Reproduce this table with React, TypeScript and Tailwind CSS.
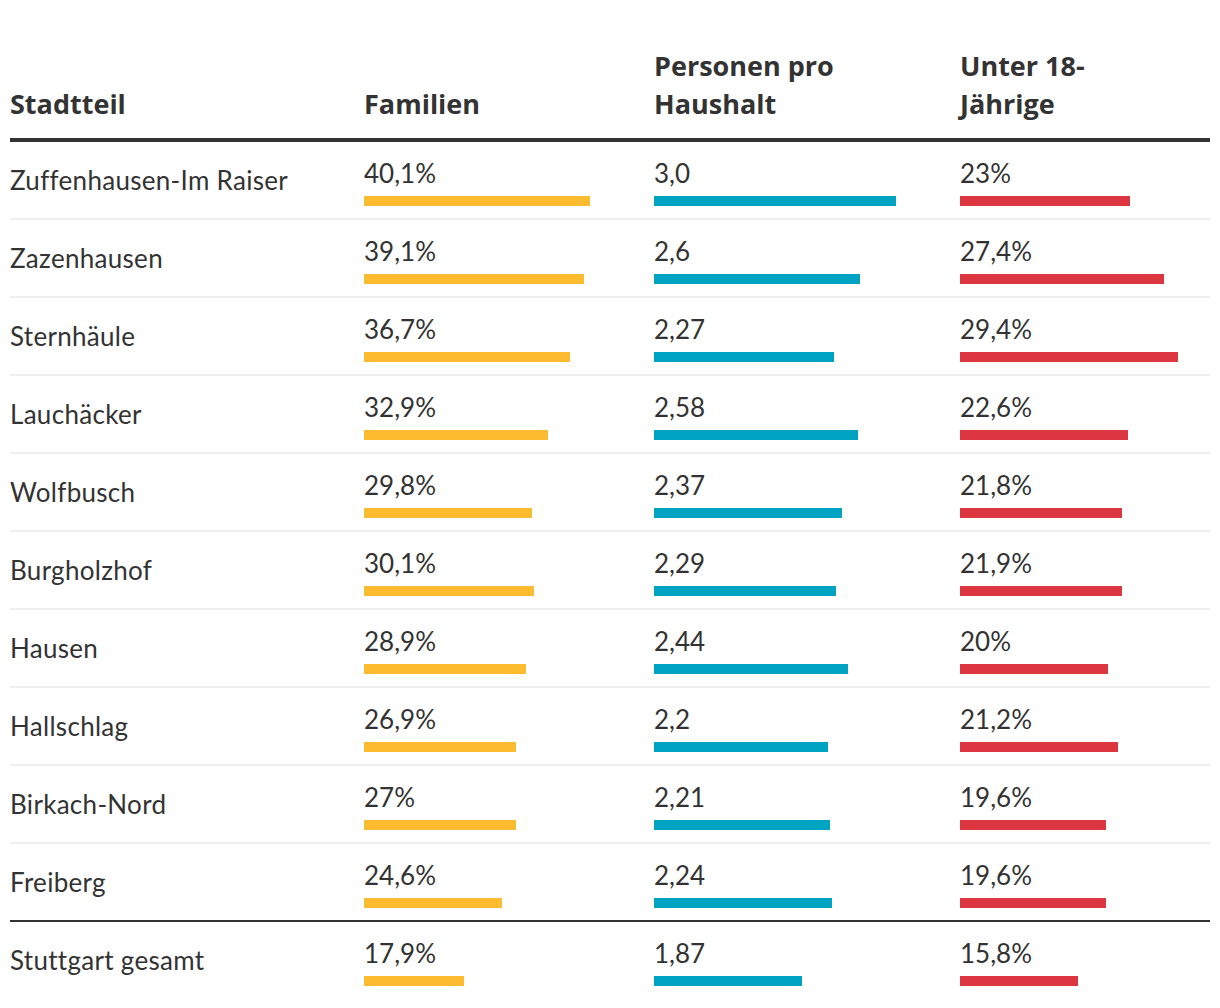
import { JSX } from "react";

type Row = {
  name: string;
  fam: string;
  famW: number;
  pers: string;
  persW: number;
  kids: string;
  kidsW: number;
};

const rows: Row[] = [
  { name: "Zuffenhausen-Im Raiser", fam: "40,1%", famW: 226, pers: "3,0", persW: 242, kids: "23%", kidsW: 170 },
  { name: "Zazenhausen", fam: "39,1%", famW: 220, pers: "2,6", persW: 206, kids: "27,4%", kidsW: 204 },
  { name: "Sternhäule", fam: "36,7%", famW: 206, pers: "2,27", persW: 180, kids: "29,4%", kidsW: 218 },
  { name: "Lauchäcker", fam: "32,9%", famW: 184, pers: "2,58", persW: 204, kids: "22,6%", kidsW: 168 },
  { name: "Wolfbusch", fam: "29,8%", famW: 168, pers: "2,37", persW: 188, kids: "21,8%", kidsW: 162 },
  { name: "Burgholzhof", fam: "30,1%", famW: 170, pers: "2,29", persW: 182, kids: "21,9%", kidsW: 162 },
  { name: "Hausen", fam: "28,9%", famW: 162, pers: "2,44", persW: 194, kids: "20%", kidsW: 148 },
  { name: "Hallschlag", fam: "26,9%", famW: 152, pers: "2,2", persW: 174, kids: "21,2%", kidsW: 158 },
  { name: "Birkach-Nord", fam: "27%", famW: 152, pers: "2,21", persW: 176, kids: "19,6%", kidsW: 146 },
  { name: "Freiberg", fam: "24,6%", famW: 138, pers: "2,24", persW: 178, kids: "19,6%", kidsW: 146 },
];

const total: Row = {
  name: "Stuttgart gesamt",
  fam: "17,9%",
  famW: 100,
  pers: "1,87",
  persW: 148,
  kids: "15,8%",
  kidsW: 118,
};

function BarCell({ value, width, color }: { value: string; width: number; color: string }): JSX.Element {
  return (
    <div className="flex flex-col pt-[16px]">
      <span className="leading-[30px]">{value}</span>
      <div className={`mt-[8px] h-[10px] ${color}`} style={{ width }} />
    </div>
  );
}

function TableRow({ row, border }: { row: Row; border: string }): JSX.Element {
  return (
    <div className={`grid grid-cols-[354px_290px_306px_250px] h-[78px] border-b-2 ${border}`}>
      <div className="flex items-center tracking-[0.3px]">{row.name}</div>
      <BarCell value={row.fam} width={row.famW} color="bg-[#fdbb2f]" />
      <BarCell value={row.pers} width={row.persW} color="bg-[#00a3c2]" />
      <BarCell value={row.kids} width={row.kidsW} color="bg-[#dc3741]" />
    </div>
  );
}

export default function App(): JSX.Element {
  return (
    <div className="min-h-[1008px] bg-white px-[10px] text-[26px] text-[#333333] font-['Lato',sans-serif]">
      <div className="grid grid-cols-[354px_290px_306px_250px] h-[142px] items-end border-b-4 border-[#333333] pb-[15px] font-['Open_Sans',sans-serif] text-[27px] font-bold leading-[38px]">
        <div>Stadtteil</div>
        <div>Familien</div>
        <div>
          Personen pro
          <br />
          Haushalt
        </div>
        <div>
          Unter 18-
          <br />
          Jährige
        </div>
      </div>

      {rows.map((r, i) => (
        <TableRow
          key={r.name}
          row={r}
          border={i === rows.length - 1 ? "border-[#333333]" : "border-[#eeeeee]"}
        />
      ))}

      <TableRow row={total} border="border-transparent" />
    </div>
  );
}
